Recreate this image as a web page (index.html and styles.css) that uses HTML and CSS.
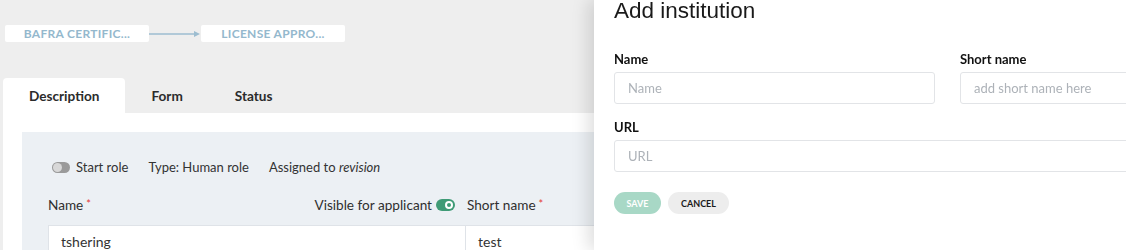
FILE: index.html
```html
<!DOCTYPE html>
<html lang="en">
<head>
  <meta charset="UTF-8" />
  <title>Role editor</title>
  <link rel="stylesheet" href="styles.css">
</head>
<body>
  <div class="page">
    <div class="flow">
      <div class="node">BAFRA CERTIFIC...</div>
      <svg class="edge" width="52" height="10" viewBox="0 0 52 10">
        <line x1="0" y1="5" x2="47" y2="5" stroke="#9dbdd0" stroke-width="1.5" />
        <polygon points="45,2 51,5 45,8" fill="#9dbdd0" />
      </svg>
      <div class="node">LICENSE APPRO...</div>
    </div>

    <div class="tabs">
      <div class="tab active">Description</div>
      <div class="tab">Form</div>
      <div class="tab">Status</div>
    </div>

    <div class="tab-panel">
      <div class="role-box">
        <div class="role-meta">
          <span class="toggle off"><span class="knob"></span></span>
          <span class="meta-item">Start role</span>
          <span class="meta-item">Type: Human role</span>
          <span class="meta-item">Assigned to <em>revision</em></span>
        </div>

        <div class="fields">
          <div class="field name-field">
            <div class="label-row">
              <label>Name<span class="req">*</span></label>
              <span class="visible">Visible for applicant <span class="toggle on"><span class="knob"></span></span></span>
            </div>
            <div class="value">tshering</div>
          </div>
          <div class="field short-field">
            <div class="label-row">
              <label>Short name<span class="req">*</span></label>
            </div>
            <div class="value">test</div>
          </div>
        </div>
      </div>
    </div>
  </div>

  <aside class="drawer">
    <h2>Add institution</h2>
    <div class="form-grid">
      <div class="form-field">
        <label>Name</label>
        <input type="text" placeholder="Name">
      </div>
      <div class="form-field">
        <label>Short name</label>
        <input type="text" placeholder="add short name here">
      </div>
      <div class="form-field wide">
        <label>URL</label>
        <input type="text" placeholder="URL">
      </div>
    </div>
    <div class="actions">
      <button class="btn save">SAVE</button>
      <button class="btn cancel">CANCEL</button>
    </div>
  </aside>
</body>
</html>
```

FILE: styles.css
```css
body {
  margin: 0;
  background: #eeeeee;
  font-family: Lato, sans-serif;
  color: #333;
  overflow: hidden;
}

.page {
  padding: 25px 0 0 3px;
}

.flow {
  display: flex;
  align-items: center;
  margin-left: 2px;
}

.node {
  width: 144px;
  height: 17px;
  line-height: 17px;
  background: #fff;
  border-radius: 2px;
  text-align: center;
  font-size: 12px;
  font-weight: bold;
  color: #94b8cd;
  letter-spacing: 0.3px;
}

.edge {
  display: block;
}

.tabs {
  display: flex;
  margin-top: 36px;
}

.tab {
  height: 35px;
  line-height: 37px;
  padding: 0 26px;
  font-size: 13.6px;
  font-weight: bold;
  color: #2b2b2b;
  border-radius: 4px 4px 0 0;
}

.tab.active {
  background: #fff;
}

.tab-panel {
  background: #fff;
  padding: 19px 0 0 19px;
  height: 118px;
}

.role-box {
  background: #ecf0f4;
  padding: 25px 26px 0;
  margin-right: 20px;
}

.role-meta {
  display: flex;
  align-items: center;
  height: 20px;
  padding-left: 4px;
  font-size: 13px;
}

.meta-item {
  margin-right: 20px;
}

.toggle {
  display: inline-block;
  position: relative;
  width: 18px;
  height: 11px;
  border-radius: 6px;
}

.toggle .knob {
  position: absolute;
  top: 1px;
  width: 9px;
  height: 9px;
  border-radius: 50%;
}

.toggle.off {
  background: #9a9a9a;
  margin-right: 6px;
}

.toggle.off .knob {
  left: 1px;
  background: #d8d8d8;
}

.toggle.on {
  background: #3f9b76;
  width: 19px;
  height: 12px;
  margin-left: 4px;
}

.toggle.on .knob {
  right: 2px;
  top: 2px;
  width: 4px;
  height: 4px;
  border: 2px solid #fff;
  background: #3f9b76;
}

.fields {
  display: flex;
  margin-top: 18px;
}

.field {
  display: flex;
  flex-direction: column;
}

.name-field {
  width: 418px;
}

.short-field {
  flex: 1;
}

.label-row {
  display: flex;
  justify-content: space-between;
  align-items: center;
  height: 20px;
  font-size: 13.6px;
  color: #2f2f2f;
  margin-bottom: 10px;
}

.name-field .label-row {
  padding-right: 11px;
}

.short-field .label-row {
  padding-left: 1px;
}

.visible {
  display: flex;
  align-items: center;
}

.req {
  color: #e53935;
  font-size: 11px;
  vertical-align: top;
  margin-left: 3px;
}

.value {
  background: #fff;
  border: 1px solid #dfe3e8;
  height: 32px;
  line-height: 32px;
  padding-left: 12px;
  font-size: 14px;
  color: #333;
}

.short-field .value {
  border-left: none;
}

.drawer {
  position: fixed;
  top: 0;
  bottom: 0;
  left: 594px;
  width: 687px;
  background: #fff;
  padding: 0 0 0 20px;
  box-shadow: -6px 0 16px rgba(0, 0, 0, 0.13);
}

.drawer h2 {
  margin: 0;
  font-family: "Liberation Sans", Arial, sans-serif;
  font-weight: normal;
  font-size: 22.5px;
  line-height: 22px;
  color: #1a1a1a;
}

.form-grid {
  display: grid;
  grid-template-columns: 321px 321px;
  column-gap: 25px;
  row-gap: 15px;
  margin-top: 29px;
}

.form-field.wide {
  grid-column: 1 / 3;
}

.form-field label {
  display: block;
  font-size: 13px;
  font-weight: bold;
  color: #111;
  line-height: 16px;
  margin-bottom: 5px;
}

.form-field input {
  display: block;
  box-sizing: border-box;
  width: 100%;
  height: 32px;
  border: 1px solid #e2e4e7;
  border-radius: 3px;
  padding: 0 13px;
  font-family: Lato, sans-serif;
  font-size: 13px;
  outline: none;
}

.form-field input::placeholder {
  color: #adb2b8;
}

.actions {
  display: flex;
  gap: 7px;
  margin-top: 20px;
}

.btn {
  height: 22px;
  border: none;
  border-radius: 11px;
  font-family: Lato, sans-serif;
  font-size: 9px;
  font-weight: bold;
  padding: 0;
  cursor: pointer;
}

.btn.save {
  width: 47px;
  background: #a8d8c6;
  color: #fff;
}

.btn.cancel {
  width: 61px;
  background: #ededed;
  color: #1a1a1a;
}
```
